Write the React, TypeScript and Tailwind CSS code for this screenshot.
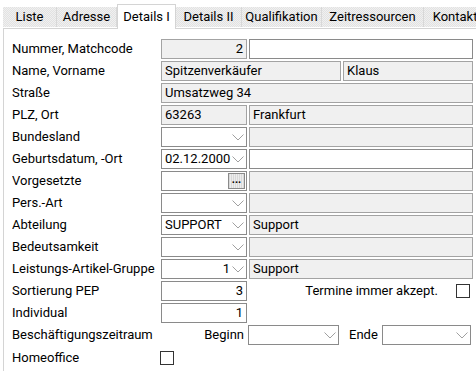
const tabs = [
  { label: 'Liste', w: 'w-[54px]' },
  { label: 'Adresse', w: 'w-[60px]' },
  { label: 'Details I', w: 'w-[59px]', active: true },
  { label: 'Details II', w: 'w-[66px]' },
  { label: 'Qualifikation', w: 'w-[80px]' },
  { label: 'Zeitressourcen', w: 'w-[102px]' },
  { label: 'Kontakte', w: 'w-[70px]' },
];

function Chevron() {
  return (
    <svg width="12" height="7" viewBox="0 0 12 7" className="shrink-0 ml-[2px] mr-[1px]">
      <polyline points="0.5,0.5 6,6 11.5,0.5" fill="none" stroke="#a0a0a0" strokeWidth="1" />
    </svg>
  );
}

function Field({ w, value = '', ro = false, right = false }: { w: string; value?: string; ro?: boolean; right?: boolean }) {
  return (
    <div
      className={`${w} h-[20px] shrink-0 border flex items-center px-[3px] overflow-hidden whitespace-nowrap ${
        ro ? 'bg-[#f0f0f0] border-[#a3a3a3]' : 'bg-white border-[#8a8a8a]'
      } ${right ? 'justify-end' : ''}`}
    >
      {value}
    </div>
  );
}

function Select({ w, value = '', right = false }: { w: string; value?: string; right?: boolean }) {
  return (
    <div className={`${w} h-[20px] shrink-0 border border-[#8a8a8a] bg-white flex items-center pl-[3px] pr-[1px]`}>
      <span className={`flex-1 whitespace-nowrap ${right ? 'text-right' : ''}`}>{value}</span>
      <Chevron />
    </div>
  );
}

function Row({ label, children }: { label: string; children?: React.ReactNode }) {
  return (
    <div className="flex h-[22px] items-center">
      <div className="w-[149px] shrink-0 overflow-hidden whitespace-nowrap">{label}</div>
      <div className="flex gap-[2px] items-center">{children}</div>
    </div>
  );
}

export default function App() {
  return (
    <div className="w-[476px] h-[371px] bg-white overflow-hidden text-[13px] text-black" style={{ fontFamily: 'Roboto, sans-serif' }}>
      {/* tab strip */}
      <div className="flex items-end h-[28px] pl-[3px]">
        {tabs.map((t) =>
          t.active ? (
            <div
              key={t.label}
              className={`${t.w} h-[25px] shrink-0 bg-white border border-b-0 border-[#d4d4d4] flex items-center justify-center relative top-[1px]`}
            >
              {t.label}
            </div>
          ) : (
            <div
              key={t.label}
              className={`${t.w} h-[20px] shrink-0 border-r border-[#d8d8d8] bg-[repeating-conic-gradient(#e2e2e2_0%_25%,#f0f0f0_0%_50%)] bg-[length:2px_2px] flex items-center justify-center whitespace-nowrap mb-[1px]`}
            >
              {t.label}
            </div>
          )
        )}
      </div>

      {/* panel */}
      <div className="ml-[3px] border-l border-t border-[#d4d4d4] pt-[9px] pl-[8px] h-[343px]">
        <Row label="Nummer, Matchcode">
          <Field w="w-[86px]" value="2" ro right />
          <Field w="w-[224px]" />
        </Row>
        <Row label="Name, Vorname">
          <Field w="w-[180px]" value="Spitzenverkäufer" ro />
          <Field w="w-[130px]" value="Klaus" ro />
        </Row>
        <Row label="Straße">
          <Field w="w-[312px]" value="Umsatzweg 34" ro />
        </Row>
        <Row label="PLZ, Ort">
          <Field w="w-[86px]" value="63263" ro />
          <Field w="w-[224px]" value="Frankfurt" ro />
        </Row>
        <Row label="Bundesland">
          <Select w="w-[86px]" />
          <Field w="w-[224px]" ro />
        </Row>
        <Row label="Geburtsdatum, -Ort">
          <Select w="w-[86px]" value="02.12.2000" />
          <Field w="w-[224px]" />
        </Row>
        <Row label="Vorgesetzte">
          <div className="w-[86px] h-[20px] shrink-0 border border-[#8a8a8a] bg-white flex items-center justify-end pr-[1px]">
            <div className="w-[17px] h-[16px] border border-[#8a8a8a] bg-[repeating-linear-gradient(90deg,#d9d9d9_0px,#d9d9d9_1px,#ededed_1px,#ededed_2px)] flex items-center justify-center text-[11px] font-bold leading-none pb-[4px]">
              ...
            </div>
          </div>
          <Field w="w-[224px]" ro />
        </Row>
        <Row label="Pers.-Art">
          <Select w="w-[86px]" />
          <Field w="w-[224px]" ro />
        </Row>
        <Row label="Abteilung">
          <Select w="w-[86px]" value="SUPPORT" />
          <Field w="w-[224px]" value="Support" ro />
        </Row>
        <Row label="Bedeutsamkeit">
          <Select w="w-[86px]" />
          <Field w="w-[224px]" ro />
        </Row>
        <Row label="Leistungs-Artikel-Gruppe">
          <Select w="w-[86px]" value="1" right />
          <Field w="w-[224px]" value="Support" ro />
        </Row>
        <div className="flex h-[22px] items-center">
          <div className="w-[149px] shrink-0">Sortierung PEP</div>
          <Field w="w-[86px]" value="3" right />
          <div className="w-[192px] text-right pr-[1px]">Termine immer akzept.</div>
          <div className="ml-[17px] w-[14px] h-[14px] border border-[#333] bg-white" />
        </div>
        <Row label="Individual">
          <Field w="w-[86px]" value="1" right />
        </Row>
        <div className="flex h-[22px] items-center">
          <div className="w-[149px] shrink-0 whitespace-nowrap">Beschäftigungszeitraum</div>
          <div className="w-[83px] shrink-0 text-right">Beginn</div>
          <div className="ml-[4px]">
            <Select w="w-[91px]" />
          </div>
          <div className="ml-[10px] w-[33px]">Ende</div>
          <Select w="w-[89px]" />
        </div>
        <div className="flex h-[23px] items-center">
          <div className="w-[148px] shrink-0">Homeoffice</div>
          <div className="w-[14px] h-[14px] border border-[#333] bg-white" />
        </div>
      </div>
    </div>
  );
}
